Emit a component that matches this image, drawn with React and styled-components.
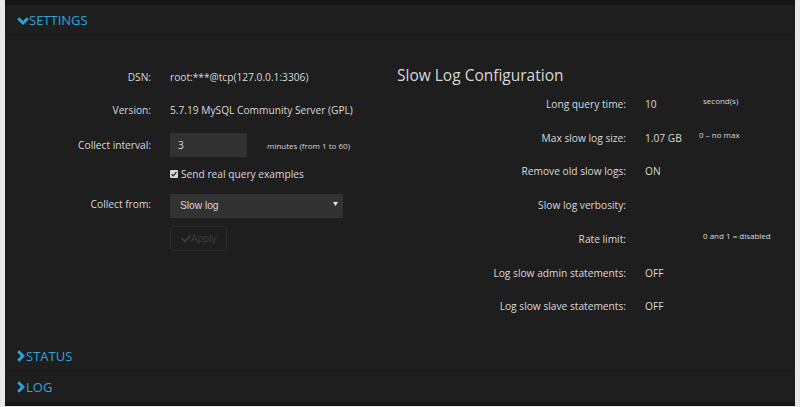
import React from "react";
import styled, { createGlobalStyle } from "styled-components";
import { FaCheck } from "react-icons/fa";

const GlobalStyle = createGlobalStyle`
  html, body {
    margin: 0;
    padding: 0;
    background: #e8e8e8;
  }
  body {
    font-family: "Open Sans", "Noto Sans", sans-serif;
  }
`;

const Frame = styled.div`
  margin: 0 5px;
  background: #1f1e1f;
  border-top: 5px solid #151515;
  border-bottom: 4px solid #151515;
  color: #d8d9da;
`;

const Header = styled.div`
  display: flex;
  align-items: center;
  height: 30px;
  padding-left: 12px;
  color: #2fa4da;
  font-size: 13px;
  line-height: 30px;
  border-bottom: ${(p) => (p.$last ? "none" : "1px solid #1a191a")};
  cursor: pointer;
  svg {
    flex: none;
    margin-right: ${(p) => (p.$open ? "0" : "1px")};
    margin-top: ${(p) => (p.$open ? "2px" : "0")};
  }
  span {
    margin-top: ${(p) => (p.$open ? "-1px" : "-1px")};
  }
`;

const Body = styled.div`
  display: flex;
  padding: 27px 0 18px 15px;
`;

const LeftCol = styled.div`
  flex: none;
  width: 377px;
  display: flex;
  flex-direction: column;
  padding-top: 2px;
`;

const FormRow = styled.div`
  display: grid;
  grid-template-columns: 131px auto;
  column-gap: 19px;
  align-items: center;
  height: ${(p) => p.$h}px;
  margin-top: ${(p) => p.$mt || 0}px;
`;

const Label = styled.div`
  text-align: right;
  font-size: 10.2px;
  white-space: nowrap;
  color: #d8d9da;
`;

const Value = styled.div`
  font-size: 10.2px;
  white-space: nowrap;
  color: #d8d9da;
  display: flex;
  align-items: center;
`;

const Note = styled.span`
  font-size: 8px;
  color: #d8d9da;
  white-space: nowrap;
  margin-left: ${(p) => p.$ml || 0}px;
  margin-bottom: ${(p) => p.$mb || 0}px;
`;

const TextInput = styled.input`
  box-sizing: border-box;
  width: 77px;
  height: 24px;
  border: none;
  outline: none;
  background: #333233;
  color: #d8d9da;
  font-family: "Open Sans", sans-serif;
  font-size: 10.2px;
  padding: 0 8px;
`;

const CheckLabel = styled.label`
  display: flex;
  align-items: center;
  gap: 3px;
  font-size: 10.2px;
  color: #d8d9da;
  white-space: nowrap;
`;

const SelectWrap = styled.div`
  position: relative;
  width: 173px;
  height: 24px;
`;

const Select = styled.select`
  appearance: none;
  box-sizing: border-box;
  width: 100%;
  height: 100%;
  border: none;
  outline: none;
  background: #333233;
  color: #d8d9da;
  font-family: "Liberation Sans", Arial, sans-serif;
  font-size: 10.2px;
  padding: 0 0 0 10px;
`;

const Caret = styled.svg`
  position: absolute;
  right: 5px;
  top: 10px;
  pointer-events: none;
`;

const ApplyButton = styled.button`
  box-sizing: border-box;
  display: flex;
  align-items: center;
  height: 25px;
  width: 57px;
  padding: 0 0 0 10px;
  background: transparent;
  border: 1px solid #2b2a2b;
  border-radius: 3px;
  color: #3d3c3d;
  font-family: "Liberation Sans", Arial, sans-serif;
  font-size: 10.2px;
  cursor: default;
`;

const RightCol = styled.div`
  flex: none;
  display: flex;
  flex-direction: column;
`;

const Heading = styled.h3`
  margin: 0;
  font-weight: 400;
  font-size: 15.5px;
  line-height: 24px;
  color: #d8d9da;
`;

const ConfigGrid = styled.div`
  display: grid;
  grid-template-columns: 229px 39px auto;
  column-gap: 19px;
  grid-auto-rows: 33.75px;
  align-items: center;
`;

const SmallCheck = () => (
  <svg width="8" height="8" viewBox="0 0 8 8" style={{ flex: "none" }}>
    <rect x="0" y="0" width="8" height="8" rx="1" fill="#d6d6d6" />
    <path d="M1.6 4.2 L3.3 5.8 L6.4 2.2" stroke="#222" strokeWidth="1.3" fill="none" />
  </svg>
);

const ChevronDown = () => (
  <svg width="12" height="8" viewBox="0 0 12 8">
    <path
      d="M0.4 2.1 L2.1 0.4 Q2.3 0.2 2.5 0.4 L6 3.9 L9.5 0.4 Q9.7 0.2 9.9 0.4 L11.6 2.1 Q11.8 2.3 11.6 2.5 L6.3 7.7 Q6 8 5.7 7.7 L0.4 2.5 Q0.2 2.3 0.4 2.1 Z"
      fill="currentColor"
    />
  </svg>
);

const ChevronRight = () => (
  <svg width="8" height="12" viewBox="0 0 8 12">
    <path
      d="M2.1 0.4 L0.4 2.1 Q0.2 2.3 0.4 2.5 L3.9 6 L0.4 9.5 Q0.2 9.7 0.4 9.9 L2.1 11.6 Q2.3 11.8 2.5 11.6 L7.7 6.3 Q8 6 7.7 5.7 L2.5 0.4 Q2.3 0.2 2.1 0.4 Z"
      fill="currentColor"
    />
  </svg>
);

const SectionHeader = ({ title, open, last }) => (
  <Header $open={open} $last={last}>
    {open ? <ChevronDown /> : <ChevronRight />}
    <span>{title}</span>
  </Header>
);

const config = [
  { label: "Long query time:", value: "10", note: "second(s)" },
  { label: "Max slow log size:", value: "1.07 GB", note: "0 – no max", ml: -4 },
  { label: "Remove old slow logs:", value: "ON" },
  { label: "Slow log verbosity:", value: "" },
  { label: "Rate limit:", value: "", note: "0 and 1 = disabled" },
  { label: "Log slow admin statements:", value: "OFF" },
  { label: "Log slow slave statements:", value: "OFF" },
];

export default function App() {
  return (
    <>
      <GlobalStyle />
      <Frame>
        <SectionHeader title="SETTINGS" open />
        <Body>
          <LeftCol>
            <FormRow $h={24}>
              <Label>DSN:</Label>
              <Value>root:***@tcp(127.0.0.1:3306)</Value>
            </FormRow>
            <FormRow $h={24} $mt={9}>
              <Label>Version:</Label>
              <Value>5.7.19 MySQL Community Server (GPL)</Value>
            </FormRow>
            <FormRow $h={24} $mt={11}>
              <Label>Collect interval:</Label>
              <Value>
                <TextInput defaultValue="3" />
                <Note $ml={20}>minutes (from 1 to 60)</Note>
              </Value>
            </FormRow>
            <FormRow $h={14} $mt={10}>
              <span />
              <CheckLabel>
                <SmallCheck />
                Send real query examples
              </CheckLabel>
            </FormRow>
            <FormRow $h={24} $mt={11}>
              <Label>Collect from:</Label>
              <SelectWrap>
                <Select defaultValue="slowlog">
                  <option value="slowlog">Slow log</option>
                  <option value="perfschema">Performance Schema</option>
                </Select>
                <Caret width="5" height="4" viewBox="0 0 5 4">
                  <path d="M0 0 L5 0 L2.5 4 Z" fill="#e6e6e6" />
                </Caret>
              </SelectWrap>
            </FormRow>
            <FormRow $h={25} $mt={10}>
              <span />
              <div>
                <ApplyButton disabled>
                  <FaCheck size={10} />
                  Apply
                </ApplyButton>
              </div>
            </FormRow>
          </LeftCol>
          <RightCol>
            <Heading>Slow Log Configuration</Heading>
            <ConfigGrid>
              {config.map((c) => (
                <React.Fragment key={c.label}>
                  <Label>{c.label}</Label>
                  <Value>{c.value}</Value>
                  {c.note ? (
                    <Note $ml={c.ml} $mb={6}>
                      {c.note}
                    </Note>
                  ) : (
                    <span />
                  )}
                </React.Fragment>
              ))}
            </ConfigGrid>
          </RightCol>
        </Body>
        <SectionHeader title="STATUS" />
        <SectionHeader title="LOG" last />
      </Frame>
    </>
  );
}
